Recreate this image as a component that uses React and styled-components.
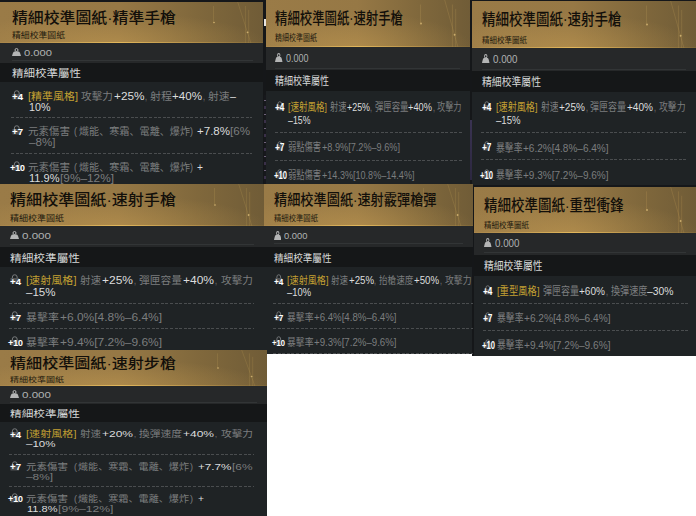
import { useLayoutEffect, useRef, useState } from 'react';
import styled, { createGlobalStyle } from 'styled-components';

// 한 줄 조각: [글자, 톤, 시작, 끝]
const style4 = (name, a, aVal, b, bVal, stops) => [
	[`[${name}]`, 'gold', stops[0], stops[1]],
	[a, 'label', stops[2], stops[3]],
	[aVal, 'value', stops[4], stops[5]],
	[',', 'label', stops[6], stops[7]],
	[b, 'label', stops[8], stops[9]],
	[bVal, 'value', stops[10], stops[11]],
];

const element = (x, open) => [
	['元素傷害', 'label', x, x + 42],
	['(', 'label', open, open + 3],
	['熾能、寒霜、電離、爆炸', 'label', open + 4.5, open + 115.5],
	[')', 'label', open + 116, open + 119],
];

const wide = [26, 76.5, 80, 101, 102, 133, 134, 136, 139, 182, 183, 214];

const columns = [
	{
		width: 264,
		height: 516,
		cards: [
			{
				id: 'precise-pistol',
				x: 0, width: 263, top: 2, banner: 41, weight: 20, band: 19,
				title: '精細校準圖紙·精準手槍', titleW: 164, titleY: 15.5, titleSize: 14.8,
				subW: 53, subY: 33, subSize: 7.6,
				pad: 12, badge: 17, text: 28, lh: 11.4, size: 10,
				weightW: 28, weightY: 9, headW: 69, headSize: 10.5, ruleY: 17,
				dash: [11, 252],
				rows: [
					{
						level: '+4', pad: 7.9, h: 36,
						lines: [
							[
								['[精準風格]', 'gold', 28, 78],
								['攻擊力', 'label', 81, 113],
								['+25%', 'value', 113.5, 144],
								[',', 'label', 145, 147],
								['射程', 'label', 149.5, 171.5],
								['+40%', 'value', 172, 202],
								[',', 'label', 203, 205],
								['射速', 'label', 208, 229.5],
								['–', 'value', 230, 236],
							],
							[['10%', 'value', 28.5, 50]],
						],
					},
					{
						level: '+7', pad: 7.4, h: 36,
						lines: [
							[...element(28, 74), ['+7.8%', 'value', 196.5, 229.5], ['[6%', 'range', 230, 250]],
							[['–8%]', 'range', 28.5, 55]],
						],
					},
					{
						level: '+10', pad: 6.9, h: 30,
						lines: [
							[...element(28, 74), ['+', 'value', 196.5, 202.5]],
							[['11.9%', 'value', 28.5, 59], ['[9%–12%]', 'range', 59.5, 113.5]],
						],
					},
				],
			},
			{
				id: 'rapid-pistol-c',
				x: 0, width: 264, top: 0, banner: 42, weight: 21, band: 20,
				title: '精細校準圖紙·速射手槍', titleW: 166, titleY: 16, titleSize: 14.8,
				subW: 54, subY: 33.5, subSize: 7.6,
				pad: 10, badge: 15, text: 26, lh: 11.5, size: 10,
				weightW: 29, weightY: 9, headW: 70, headSize: 10.5, ruleY: 18,
				dash: [9, 254],
				rows: [
					{
						level: '+4', pad: 7.7, h: 37,
						lines: [
							[
								...style4('速射風格', '射速', '+25%', '彈匣容量', '+40%', wide),
								[',', 'label', 215, 217],
								['攻擊力', 'label', 220.5, 252.5],
							],
							[['–15%', 'value', 26, 55.5]],
						],
					},
					{
						level: '+7', pad: 7.2, h: 25,
						lines: [[['暴擊率', 'label', 26, 59], ['+6.0%[4.8%–6.4%]', 'range', 59.5, 161.5]]],
					},
					{
						level: '+10', pad: 7.2, h: 21,
						lines: [[['暴擊率', 'label', 26, 59], ['+9.4%[7.2%–9.6%]', 'range', 59.5, 161.5]]],
					},
				],
			},
			{
				id: 'rapid-rifle',
				x: 0, width: 266.5, top: 0, banner: 36, weight: 18, band: 18,
				title: '精細校準圖紙·速射步槍', titleW: 166, titleY: 13, titleSize: 13.4,
				subW: 54, subY: 29, subSize: 7,
				pad: 10, badge: 15, text: 26, lh: 10, size: 9.2,
				weightW: 29, weightY: 8, headW: 70, headSize: 9.6, ruleY: 16,
				dash: [9, 254],
				rows: [
					{
						level: '+4', pad: 7, h: 33,
						lines: [
							[
								...style4('速射風格', '射速', '+20%', '換彈速度', '+40%', wide),
								[',', 'label', 215, 217],
								['攻擊力', 'label', 220.5, 252.5],
							],
							[['–10%', 'value', 26, 55.5]],
						],
					},
					{
						level: '+7', pad: 6.5, h: 32,
						lines: [
							[...element(26, 73.5), ['+7.7%', 'value', 197.5, 231], ['[6%', 'range', 231.5, 252]],
							[['–8%]', 'range', 26, 53]],
						],
					},
					{
						level: '+10', pad: 6.5, h: 29,
						lines: [
							[...element(26, 73.5), ['+', 'value', 197.5, 203.5]],
							[['11.8%', 'value', 27, 57.5], ['[9%–12%]', 'range', 58, 113.5]],
						],
					},
				],
			},
		],
	},
	{
		width: 208,
		height: 354,
		specks: true,
		cards: [
			{
				id: 'rapid-pistol-a',
				x: 266, indent: 2, width: 204, top: 0, banner: 47, weight: 23, band: 21,
				title: '精細校準圖紙·速射手槍', titleW: 128, titleY: 18, titleSize: 16,
				subW: 42, subY: 37.5, subSize: 8.6,
				pad: 9, badge: 14, text: 22, lh: 12.5, size: 11,
				weightW: 22.5, weightY: 10, headW: 54, headSize: 11.5, ruleY: 21,
				dash: [275, 462],
				rows: [
					{
						level: '+4', pad: 9.7, h: 42,
						lines: [
							[
								...style4('速射風格', '射速', '+25%', '彈匣容量', '+40%', [
									288, 327, 329.5, 346, 346.5, 369.5, 370, 372, 374.5, 408, 408, 432,
								]),
								[',', 'label', 432.5, 434.5],
								['攻擊力', 'label', 436.5, 461],
							],
							[['–15%', 'value', 288, 310.5]],
						],
					},
					{
						level: '+7', pad: 7.7, h: 28,
						lines: [[['弱點傷害', 'label', 288, 321], ['+8.9%[7.2%–9.6%]', 'range', 321.5, 399.5]]],
					},
					{
						level: '+10', pad: 7.7, h: 23,
						lines: [[['弱點傷害', 'label', 288, 321], ['+14.3%[10.8%–14.4%]', 'range', 321.5, 414]]],
					},
				],
			},
			{
				id: 'rapid-shotgun',
				x: 264, width: 209, top: 0, banner: 42, weight: 21, band: 20,
				title: '精細校準圖紙·速射霰彈槍彈', titleW: 162.5, titleY: 16, titleSize: 14.8,
				subW: 44, subY: 34, subSize: 7.6,
				pad: 9.5, badge: 14.5, text: 23, lh: 11.5, size: 10,
				weightW: 23.5, weightY: 9, headW: 57.5, headSize: 10.5, ruleY: 17,
				dash: [273, 473],
				rows: [
					{
						level: '+4', pad: 7.7, h: 37,
						lines: [
							[
								...style4('速射風格', '射速', '+25%', '抬槍速度', '+50%', [
									287, 328.5, 331, 348, 348.5, 373.5, 374, 376, 379, 413.5, 414, 439,
								]),
								[',', 'label', 440, 442],
								['攻擊力', 'label', 444.5, 471],
							],
							[['–10%', 'value', 287, 311]],
						],
					},
					{
						level: '+7', pad: 7.2, h: 25,
						lines: [[['暴擊率', 'label', 287, 313.5], ['+6.4%[4.8%–6.4%]', 'range', 314, 396.5]]],
					},
					{
						level: '+10', pad: 7.2, h: 25, closed: true,
						lines: [[['暴擊率', 'label', 287, 313.5], ['+9.3%[7.2%–9.6%]', 'range', 314, 396.5]]],
					},
				],
			},
		],
	},
	{
		width: 224,
		height: 356,
		cards: [
			{
				id: 'rapid-pistol-b',
				x: 472, width: 224, top: 1, banner: 47, weight: 23, band: 21,
				title: '精細校準圖紙·速射手槍', titleW: 139.5, titleY: 18.5, titleSize: 15.6,
				subW: 45, subY: 38, subSize: 8.4,
				pad: 10, badge: 14.5, text: 24, lh: 12.5, size: 11,
				weightW: 24.5, weightY: 10, headW: 59, headSize: 11.5, ruleY: 21,
				dash: [481, 686],
				rows: [
					{
						level: '+4', pad: 8.7, h: 41,
						lines: [
							[
								...style4('速射風格', '射速', '+25%', '彈匣容量', '+40%', [
									496, 537.5, 540.5, 558, 559, 585, 586, 588, 590, 626, 627, 653,
								]),
								[',', 'label', 654, 656],
								['攻擊力', 'label', 658.5, 685],
							],
							[['–15%', 'value', 496, 520.5]],
						],
					},
					{
						level: '+7', pad: 8.2, h: 27,
						lines: [[['暴擊率', 'label', 496, 522.5], ['+6.2%[4.8%–6.4%]', 'range', 523, 608.5]]],
					},
					{
						level: '+10', pad: 8.7, h: 25,
						lines: [[['暴擊率', 'label', 496, 522.5], ['+9.3%[7.2%–9.6%]', 'range', 523, 608.5]]],
					},
				],
			},
			{
				id: 'heavy-smg',
				x: 474, indent: 2, width: 222, top: 2, banner: 46, weight: 22, band: 21,
				title: '精細校準圖紙·重型衝鋒', titleW: 139.5, titleY: 18, titleSize: 15.4,
				subW: 45, subY: 37, subSize: 8.4,
				pad: 10, badge: 14, text: 23, lh: 12.5, size: 11,
				weightW: 24.5, weightY: 9.5, headW: 58.5, headSize: 11.5, ruleY: 19,
				dash: [483, 688],
				rows: [
					{
						level: '+4', pad: 8.7, h: 28,
						lines: [
							[
								['[重型風格]', 'gold', 497, 539.5],
								['彈匣容量', 'label', 542.5, 578.5],
								['+60%', 'value', 579, 605],
								[',', 'label', 606, 608],
								['換彈速度', 'label', 610.5, 647],
								['–30%', 'value', 647, 673.5],
							],
						],
					},
					{
						level: '+7', pad: 7.7, h: 27,
						lines: [[['暴擊率', 'label', 497, 523.5], ['+6.2%[4.8%–6.4%]', 'range', 524, 610.5]]],
					},
					{
						level: '+10', pad: 7.7, h: 25,
						lines: [[['暴擊率', 'label', 497, 523.5], ['+9.4%[7.2%–9.6%]', 'range', 524, 610.5]]],
					},
				],
			},
		],
	},
];

// 글자를 지정된 폭에 맞게 가로로 늘이거나 줄임
function Fit({ width, tone, gap = 0, children }) {
	const ref = useRef(null);
	const [scale, setScale] = useState(1);

	useLayoutEffect(() => {
		const el = ref.current;
		el.style.transform = 'none';
		const next = width / el.getBoundingClientRect().width;
		el.style.transform = `translateY(0.7px) scaleX(${next})`;
		setScale(next);
	}, [width, children]);

	return (
		<FitBox $tone={tone} $width={width} $gap={gap}>
			<FitText ref={ref} style={{ transform: `translateY(0.7px) scaleX(${scale})` }}>
				{children}
			</FitText>
		</FitBox>
	);
}

function Line({ segments, start, lh }) {
	return (
		<LineBox $lh={lh}>
			{segments.map(([text, tone, from, to], i) => (
				<Fit
					key={i}
					tone={tone}
					width={to - from}
					gap={from - (i ? segments[i - 1][3] : start)}
				>
					{text}
				</Fit>
			))}
		</LineBox>
	);
}

function Card({ card }) {
	const narrow = card.weightW < 26;

	return (
		<CardBox $width={card.width} $indent={card.indent} $top={card.top}>
			<Banner $h={card.banner} $pad={card.pad}>
				<Title $size={card.titleSize} $y={card.titleY}>
					<Fit width={card.titleW}>{card.title}</Fit>
				</Title>
				<Subtitle $size={card.subSize} $y={card.subY - card.titleY}>
					<Fit width={card.subW}>精細校準圖紙</Fit>
				</Subtitle>
				<Sparks viewBox="0 0 60 42" preserveAspectRatio="none">
					<path
						d="M15 4V22M44 4V42M47 8V42M37 0L49 42"
						stroke="#c4a05a"
						strokeWidth="0.6"
						opacity="0.35"
						fill="none"
					/>
					<circle cx="15.5" cy="21" r="0.8" fill="#e8c880" opacity="0.7" />
					<circle cx="46" cy="31" r="0.9" fill="#e8c880" opacity="0.7" />
				</Sparks>
			</Banner>
			<Weight $h={card.weight} $pad={card.pad} $y={card.weightY} $size={card.size - 0.2}>
				<WeightIcon
					$w={narrow ? 7.5 : 9}
					$h={narrow ? 9 : 8}
					viewBox="0 0 18 16"
					preserveAspectRatio="none"
				>
					<circle cx="9" cy="4" r="3" fill="none" stroke="#b4b5b5" strokeWidth="2" />
					<path d="M4.5 7H13.5C15 7 16 9 18 16H0C2 9 3 7 4.5 7Z" fill="#b4b5b5" />
				</WeightIcon>
				<Fit width={card.weightW}>0.000</Fit>
				<Rule $y={card.ruleY} $pad={card.pad} />
			</Weight>
			<Band $h={card.band} $pad={card.pad} $size={card.headSize}>
				<Fit width={card.headW}>精細校準屬性</Fit>
			</Band>
			{card.rows.map((row, i) => (
				<Row key={row.level} $h={row.h} $pad={row.pad}>
					<Badge $center={card.badge} $width={card.text} $lh={card.lh}>
						<Lock $w={narrow ? 7.5 : 9.5} viewBox="0 0 20 20" preserveAspectRatio="none">
							<path d="M5 9V6a5 4.5 0 0 1 10 0v3" fill="none" stroke="#7b7e80" strokeWidth="2" />
							<rect x="1" y="8" width="18" height="11" rx="1" fill="#505355" />
						</Lock>
						<Level $size={card.size - 0.6}>
							<Fit width={(row.level.length > 2 ? 15 : 11) * (narrow ? 0.86 : 1)}>{row.level}</Fit>
						</Level>
					</Badge>
					<Lines $size={card.size}>
						{row.lines.map((segments, n) => (
							<Line key={n} segments={segments} start={card.x + card.text} lh={card.lh} />
						))}
					</Lines>
					{(i < card.rows.length - 1 || row.closed) && (
						<Dash $left={card.dash[0] - card.x} $width={card.dash[1] - card.dash[0]} />
					)}
				</Row>
			))}
		</CardBox>
	);
}

function App() {
	return (
		<>
			<GlobalStyle />
			<Board>
				{columns.map((column) => (
					<Column
						key={column.width}
						$width={column.width}
						$height={column.height}
						$specks={column.specks}
					>
						{column.cards.map((card) => (
							<Card key={card.id} card={card} />
						))}
					</Column>
				))}
			</Board>
		</>
	);
}

const GlobalStyle = createGlobalStyle`
	* {
		box-sizing: border-box;
	}
	body {
		margin: 0;
		background: #fff;
		overflow: hidden;
		font-family: "Liberation Sans", "Noto Sans CJK SC", "Noto Sans CJK TC", sans-serif;
	}
`;

const tones = {
	gold: '#c3a032',
	label: '#7c7e7f',
	value: '#dcdddd',
	range: '#7b7d7e',
};

// 카드 사이 틈으로 비치는 점들
const specks = `
	linear-gradient(#e8e4e0, #e8e4e0) 0 19px / 2px 7px no-repeat,
	repeating-linear-gradient(#17181c 0 5px, #6d6178 5px 6px, #17181c 6px 11px, #3a3048 11px 14px) 0 95px / 2px 88px no-repeat,
	linear-gradient(#3a3352, #2c2740) 206px 120px / 2px 60px no-repeat,
`;

const Board = styled.main`
	display: flex;
	align-items: flex-start;
	width: 696px;
	height: 516px;
`;

const Column = styled.section`
	flex: 0 0 ${({ $width }) => $width}px;
	width: ${({ $width }) => $width}px;
	height: ${({ $height }) => $height}px;
	background: ${({ $specks }) => $specks && specks} linear-gradient(#151719, #151719);
`;

const CardBox = styled.article`
	width: ${({ $width }) => $width}px;
	margin-left: ${({ $indent = 0 }) => $indent}px;
	border-top: ${({ $top }) => $top}px solid #15171a;
	background: #1f2325;
`;

// 금색 머리 부분
const Banner = styled.header`
	position: relative;
	height: ${({ $h }) => $h}px;
	padding-left: ${({ $pad }) => $pad}px;
	background:
		linear-gradient(90deg, #a8854a, #e2b75b 45%, #b08c48 75%, #7c6538) bottom / 100% 1.5px no-repeat,
		radial-gradient(ellipse 60% 80% at 42% 105%, rgba(200, 158, 82, 0.5), transparent),
		linear-gradient(90deg, #9a7b47 0%, #967845 45%, #80683c 75%, #705c37 100%);
	color: #120f0a;
`;

const Title = styled.h2`
	display: flex;
	align-items: center;
	height: ${({ $y }) => $y * 2}px;
	margin: 0 0 ${({ $y }) => -$y}px;
	font-size: ${({ $size }) => $size}px;
	font-weight: 500;
`;

const Subtitle = styled.div`
	display: flex;
	align-items: center;
	height: ${({ $y }) => $y * 2}px;
	font-size: ${({ $size }) => $size}px;
	color: #231b0f;
`;

const Sparks = styled.svg`
	position: absolute;
	top: 0;
	right: 0;
	width: 66px;
	height: 100%;
`;

const Weight = styled.div`
	position: relative;
	display: flex;
	align-items: center;
	gap: 3px;
	height: ${({ $h }) => $h}px;
	padding: 0 0 ${({ $h, $y }) => $h - $y * 2}px ${({ $pad }) => $pad}px;
	background: #262829;
	color: #b0b2b2;
	font-size: ${({ $size }) => $size}px;
`;

const WeightIcon = styled.svg`
	flex: none;
	width: ${({ $w }) => $w}px;
	height: ${({ $h }) => $h}px;
`;

const Rule = styled.span`
	position: absolute;
	top: ${({ $y }) => $y}px;
	left: ${({ $pad }) => $pad}px;
	right: 10px;
	height: 1px;
	background: #323536;
`;

const Band = styled.h3`
	display: flex;
	align-items: center;
	height: ${({ $h }) => $h}px;
	margin: 0;
	padding-left: ${({ $pad }) => $pad}px;
	background: #151718;
	color: #d6d7d7;
	font-size: ${({ $size }) => $size}px;
	font-weight: 400;
`;

const Row = styled.div`
	position: relative;
	display: flex;
	height: ${({ $h }) => $h}px;
	padding-top: ${({ $pad }) => $pad}px;
`;

const Badge = styled.div`
	position: relative;
	display: flex;
	flex: none;
	align-items: center;
	justify-content: center;
	width: ${({ $width, $center }) => ($width - $center) * 2}px;
	height: ${({ $lh }) => $lh}px;
	margin-left: ${({ $width, $center }) => $center * 2 - $width}px;
`;

const Lock = styled.svg`
	flex: none;
	width: ${({ $w }) => $w}px;
	height: 10px;
	margin-top: -2px;
`;

const Level = styled.span`
	position: absolute;
	inset: 0;
	display: flex;
	align-items: center;
	justify-content: center;
	color: #fff;
	font-size: ${({ $size }) => $size}px;
	font-weight: 700;
`;

const Lines = styled.div`
	flex: none;
	font-size: ${({ $size }) => $size}px;
`;

const LineBox = styled.div`
	display: flex;
	align-items: center;
	height: ${({ $lh }) => $lh}px;
`;

const Dash = styled.span`
	position: absolute;
	bottom: 0;
	left: ${({ $left }) => $left}px;
	width: ${({ $width }) => $width}px;
	height: 1px;
	background: repeating-linear-gradient(90deg, #4a4d4f 0 3px, transparent 3px 4.6px);
`;

const FitBox = styled.span`
	display: block;
	flex: none;
	width: ${({ $width }) => $width}px;
	margin-left: ${({ $gap }) => $gap}px;
	color: ${({ $tone }) => tones[$tone] || 'inherit'};
	line-height: 1.2;
	white-space: pre;
`;

const FitText = styled.span`
	display: inline-block;
	transform-origin: left center;
`;

export default App;
